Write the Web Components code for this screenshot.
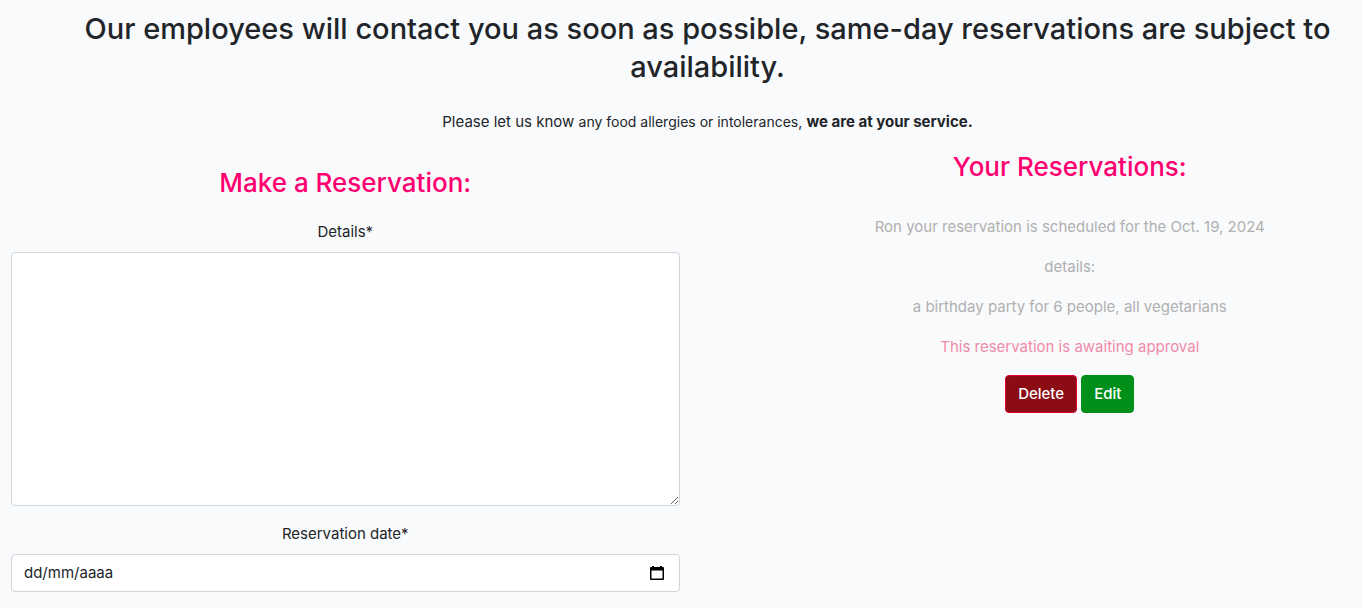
<!DOCTYPE html>
<html lang="en">
<head>
<meta charset="utf-8">
<meta name="viewport" content="width=device-width, initial-scale=1">
<title>Reservations</title>
<style>
body { margin: 0; background: #f9fafc; color: #212529; font: 400 15px/24px Inter, "Liberation Sans", sans-serif; }
</style>
</head>
<body>
<reservation-page>
  <page-intro slot="intro">
    <span slot="title">Our employees will contact you as soon as possible, same-day reservations are subject to availability.</span>
    Please let us know <small>any food allergies or intolerances,</small> <strong>we are at your service.</strong>
  </page-intro>
  <reservation-form slot="form"></reservation-form>
  <reservation-list slot="list">
    <reservation-item name="Ron" date="Oct. 19, 2024" status="This reservation is awaiting approval">a birthday party for 6 people, all vegetarians</reservation-item>
  </reservation-list>
</reservation-page>

<script>
const define = (name, html, setup) => customElements.define(name, class extends HTMLElement {
  connectedCallback() {
    if (this.shadowRoot) return;
    const root = this.attachShadow({ mode: "open" });
    root.innerHTML = html;
    if (setup) setup(this, root);
  }
});

define("reservation-page", `
<style>
  :host { display: block; padding: 10px 0 16px; }
  .columns { display: grid; grid-template-columns: 1fr 1fr; align-items: start; margin-top: 16px; }
  .form { padding: 16px 2px 0 11px; }
  .list { padding-left: 95px; }
</style>
<main>
  <slot name="intro"></slot>
  <div class="columns">
    <div class="form"><slot name="form"></slot></div>
    <div class="list"><slot name="list"></slot></div>
  </div>
</main>`);

define("page-intro", `
<style>
  :host { display: block; padding-left: 52px; text-align: center; }
  h1 { margin: 0 0 24px; font-size: 29px; line-height: 38px; font-weight: 500; }
  p { margin: 0; }
  ::slotted(small) { font-size: 14px; }
  ::slotted(strong) { font-weight: 700; }
</style>
<h1><slot name="title"></slot></h1>
<p><slot></slot></p>`);

define("reservation-form", `
<style>
  :host { display: block; }
  h2 { margin: 0 0 20px; text-align: center; color: #ff0070; font-size: 26px; line-height: 34px; font-weight: 500; }
  label { display: block; margin-bottom: 8px; text-align: center; }
  textarea, .date { display: block; box-sizing: border-box; width: 100%; background: #fff; border: 1px solid #ced4da; border-radius: 4px; }
  textarea { height: 254px; margin: 0 0 16px; padding: 6px 12px; font: inherit; color: inherit; resize: vertical; }
  .date { display: flex; align-items: center; height: 38px; padding: 0 12px; }
  input { flex: 1; min-width: 0; padding: 0; border: 0; background: none; font: inherit; color: inherit; outline: none; }
  input::placeholder { color: inherit; opacity: 1; }
  button { display: flex; padding: 2px; border: 0; background: none; cursor: pointer; }
</style>
<form>
  <h2>Make a Reservation:</h2>
  <label for="details">Details*</label>
  <textarea id="details" required></textarea>
  <label for="date">Reservation date*</label>
  <div class="date">
    <input id="date" type="text" placeholder="dd/mm/aaaa" inputmode="numeric" required>
    <button type="button" aria-label="Open calendar">
      <svg width="16" height="16" viewBox="0 0 16 16"><path d="M3 1h2v1h6V1h2v1h1q1 0 1 1v11q0 1-1 1H2q-1 0-1-1V3q0-1 1-1h1zM2.500 5.500v8h11v-8z" fill="#000" fill-rule="evenodd"/></svg>
    </button>
  </div>
</form>`);

define("reservation-list", `
<style>
  :host { display: block; text-align: center; }
  h2 { margin: 0 0 31px; color: #ff0070; font-size: 26px; line-height: 34px; font-weight: 500; }
</style>
<section>
  <h2>Your Reservations:</h2>
  <slot></slot>
</section>`);

define("reservation-item", `
<style>
  :host { display: block; }
  p { margin: 0 0 16px; color: #b0b0b0; }
  .status { color: #f08aa8; }
  .actions { display: flex; justify-content: center; gap: 4px; }
  button { height: 38px; padding: 0 12px; border: 1px solid; border-radius: 4px; color: #fff; font: inherit; font-weight: 500; cursor: pointer; }
  .delete { background: #8c0c16; border-color: #e4002f; }
  .edit { background: #00901a; border-color: #00901a; }
</style>
<article>
  <p class="summary"></p>
  <p>details:</p>
  <p><slot></slot></p>
  <p class="status"></p>
  <div class="actions">
    <button type="button" class="delete">Delete</button>
    <button type="button" class="edit">Edit</button>
  </div>
</article>`, (host, root) => {
  root.querySelector(".summary").textContent =
    `${host.getAttribute("name")} your reservation is scheduled for the ${host.getAttribute("date")}`;
  root.querySelector(".status").textContent = host.getAttribute("status");
});
</script>
</body>
</html>
